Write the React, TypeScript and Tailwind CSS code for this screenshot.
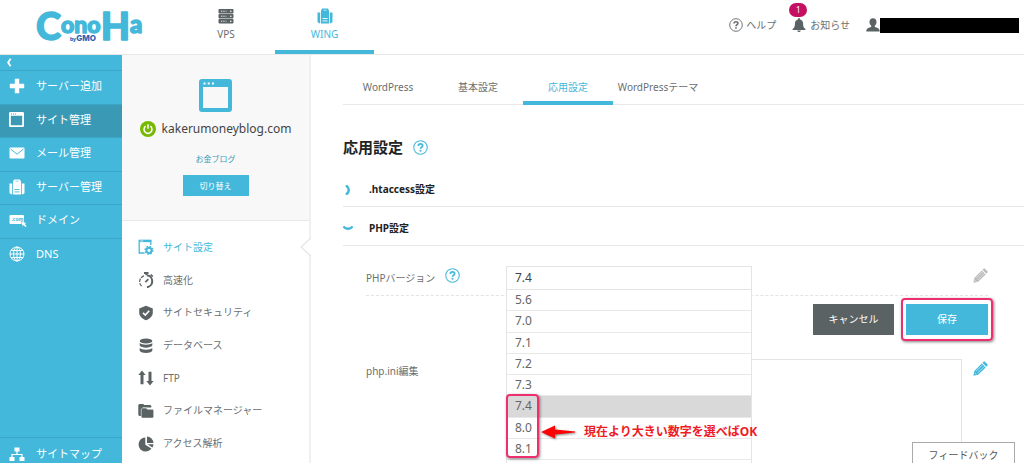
import React, { useState } from 'react';

interface NavItem {
  label: string;
  icon: React.ReactNode;
}

const versions = ['5.6', '7.0', '7.1', '7.2', '7.3', '7.4', '8.0', '8.1'];
const tabs = ['WordPress', '基本設定', '応用設定', 'WordPressテーマ'];

const Logo = () => (
  <svg viewBox="0 0 104 34" className="h-[34px] w-[104px] overflow-visible" role="img" aria-label="ConoHa by GMO">
    <text y="30" fill="#43b8da" stroke="#43b8da" strokeWidth="1.4" strokeLinejoin="round" fontFamily="Lato, sans-serif" fontWeight="900">
      <tspan x="0" fontSize="38">C</tspan>
      <tspan y="23" fontSize="23">ono</tspan>
      <tspan y="30" fontSize="38">H</tspan>
      <tspan y="23" fontSize="24">a</tspan>
    </text>
    <text x="34" y="31" fontWeight="800" fill="#2f5fb3" fontFamily="Inter, sans-serif">
      <tspan fontSize="5">by</tspan>
      <tspan fontSize="8">GMO</tspan>
    </text>
  </svg>
);

const RackIcon = () => (
  <svg viewBox="0 0 16 16" className="size-4" fill="#5a6263">
    {[1, 6, 11].map((y) => (
      <g key={y}>
        <rect x="0.5" y={y} width="15" height="4.4" rx="0.8" />
        <path d={`M3 ${y + 2.2}h5.500`} stroke="#fff" strokeWidth="0.9" strokeDasharray="1 0.7" />
        <circle cx="12.8" cy={y + 2.2} r="0.8" fill="#fff" />
      </g>
    ))}
  </svg>
);

const WingIcon = ({ line }: { line: string }) => (
  <svg viewBox="0 0 16 16" className="size-4" fill="currentColor">
    <path d="M4 2.200 5.200.6h5.600L12 2.200V15.400H4z" />
    <path d="M.5 4.500h2.700v10.800H2L.5 14zM12.800 4.500h2.700V14L14 15.300h-1.200z" />
    <path d="M5.500 10.500h5M5.500 12.900h5" stroke={line} strokeWidth="0.9" />
    <path d="M6.500 2.200h3" stroke={line} strokeWidth="0.6" />
  </svg>
);

const HelpIcon = ({ className }: { className: string }) => (
  <svg viewBox="0 0 16 16" className={className} fill="none" stroke="currentColor">
    <circle cx="8" cy="8" r="7.2" strokeWidth="1.1" />
    <path d="M5.700 6.300c0-1.400 1-2.100 2.300-2.100s2.300.8 2.300 1.900c0 1.700-2.300 1.500-2.300 3.200" strokeWidth="1.8" />
    <path d="M8 10.500v1.900" strokeWidth="1.9" />
  </svg>
);

const WindowIcon = ({ className, dot }: { className: string; dot: string }) => (
  <svg viewBox="0 0 33 33" className={className}>
    <path fill="currentColor" fillRule="evenodd" d="M3 0h27a3 3 0 0 1 3 3v27a3 3 0 0 1-3 3H3a3 3 0 0 1-3-3V3a3 3 0 0 1 3-3zm1 8v21h25V8z" />
    <path d="M4.5 4.5h2M8.7 4.5h2M12.9 4.5h2" stroke={dot} strokeWidth="2.2" />
  </svg>
);

const PencilIcon = ({ className }: { className: string }) => (
  <svg viewBox="0 0 16 16" className={className} fill="currentColor">
    <path d="m12.700.7 2.900 2.900c.3.300.3.700 0 1l-1.400 1.400-4.100-4.100L11.600.6c.3-.3.800-.2 1.100.1z" />
    <path d="m9.400 2.700 4.100 4.100-8 7.900-5.100.9 1-5z" />
    <path d="m3.200 11 6.800-6.800M5 12.800l6.800-6.800" stroke="#fff" strokeWidth="0.6" />
    <path d="m1.700 12.500 1.900 1.900" stroke="#fff" strokeWidth="0.5" />
  </svg>
);

const sideItems: NavItem[] = [
  { label: 'サーバー追加', icon: <svg viewBox="0 0 16 16" className="size-4"><path d="M8 .8v14.4M.8 8h14.4" stroke="currentColor" strokeWidth="4.4" /></svg> },
  { label: 'サイト管理', icon: <WindowIcon className="size-[15px]" dot="#3a9ab5" /> },
  { label: 'メール管理', icon: <svg viewBox="0 0 16 16" className="size-4"><rect x="0.5" y="2.5" width="15" height="11" rx="1" fill="currentColor" /><path d="m1.500 4 6.500 5.200L14.500 4" fill="none" stroke="#43b8da" strokeWidth="1" /></svg> },
  { label: 'サーバー管理', icon: <WingIcon line="#43b8da" /> },
  { label: 'ドメイン', icon: <svg viewBox="0 0 18 16" className="h-4 w-[18px] overflow-visible"><rect x="0.5" y="3" width="14.5" height="9" rx="1" fill="currentColor" /><text x="2.4" y="9" fontSize="5" fontWeight="700" fontFamily="Noto Sans, sans-serif" fill="#43b8da">.com</text><path d="m12 9 5.500 2-1.500 1 1.800 1.900-1.400 1.300-1.800-1.900-1 1.400z" fill="currentColor" stroke="#43b8da" strokeWidth="0.5" /></svg> },
  { label: 'DNS', icon: <svg viewBox="0 0 16 16" className="size-4" fill="none" stroke="currentColor"><circle cx="8" cy="8" r="7" /><ellipse cx="8" cy="8" rx="3.4" ry="7" /><path d="M8 1v14M1 8h14M2 4.5h12M2 11.5h12" /></svg> },
];

const menuItems: NavItem[] = [
  { label: 'サイト設定', icon: <svg viewBox="0 0 16 16" className="size-4"><path d="M6.5 14H1.2V1.5h11.6V6" fill="none" stroke="currentColor" strokeWidth="1.3" /><path d="M1 2h12.300" stroke="currentColor" strokeWidth="2.2" /><path d="M2.3 2h3" stroke="#fff" strokeWidth="0.7" /><circle cx="11" cy="11.3" r="2.6" fill="none" stroke="currentColor" strokeWidth="2" /><circle cx="11" cy="11.3" r="3.9" fill="none" stroke="currentColor" strokeWidth="1.4" strokeDasharray="1.53" /></svg> },
  { label: '高速化', icon: <svg viewBox="0 0 16 16" className="size-4" fill="none" stroke="currentColor"><path d="M9 3.3a6 6 0 0 1 0 11.9" strokeWidth="2" /><path d="M6 3.9a6 6 0 0 0-2 10.5" strokeWidth="1.2" strokeDasharray="3.5 1" /><path d="M6 1h4.5M8.3 1v2.3M12.7 2.6l2 2" strokeWidth="1.8" /><path d="m7.4 10.2 3-3" strokeWidth="1.7" /></svg> },
  { label: 'サイトセキュリティ', icon: <svg viewBox="0 0 16 16" className="size-4"><path d="m8 .8 6.8 2.7v4.2c0 3.6-3.2 6-6.8 7.6-3.6-1.6-6.8-4-6.8-7.6V3.5z" fill="currentColor" /><path d="m5 7.8 2.3 2.2 3.9-4.2" fill="none" stroke="#fff" strokeWidth="1.6" /></svg> },
  { label: 'データベース', icon: <svg viewBox="0 0 16 16" className="size-4" fill="currentColor"><ellipse cx="8" cy="3" rx="6.3" ry="2.4" /><path d="M1.7 5c2 2.2 10.6 2.2 12.6 0v2.6c-1.8 2.8-10.8 2.8-12.6 0z" /><path d="M1.7 10c2 2.2 10.6 2.2 12.6 0v2.7c-1.8 3-10.8 3-12.6 0z" /></svg> },
  { label: 'FTP', icon: <svg viewBox="0 0 16 16" className="size-4" fill="currentColor"><path d="M4 .6 7.600 5H5.500v9.200h-3V5H.4zM12 15.400 8.400 11h2.100V1.800h3V11h2.100z" /></svg> },
  { label: 'ファイルマネージャー', icon: <svg viewBox="0 0 16 16" className="size-4" fill="currentColor"><path d="M.3 12V2l1-1h4l1 1h6.200l.8 1v1.500H5.200L3.300 6v7H1.300z" /><path d="M3.200 6.300 4.500 5l3.800.1 1.200 1.200h5l1.200 1v6.700l-1 1H4.200l-1-1z" stroke="#fff" strokeWidth="0.5" /></svg> },
  { label: 'アクセス解析', icon: <svg viewBox="0 0 16 16" className="size-4" fill="currentColor"><path d="M7.300 1.500v7.200l6.100 3.700A7 7 0 1 1 7.300 1.500z" /><path d="M9 .6a6.600 6.600 0 0 1 6.400 6.400H9z" /><path d="M9.500 8.300h6a6.500 6.500 0 0 1-1.100 3.200z" /></svg> },
];

const Header = () => (
  <header className="flex h-[55px] shrink-0 border-b border-[#e8e8e8] bg-white">
    <a href="#" className="ml-9 mt-[10px] w-[104px]">
      <Logo />
    </a>
    <nav className="ml-[37px] flex">
      <a href="#vps" className="flex w-[98px] flex-col items-center border-b-4 border-transparent pt-2">
        <RackIcon />
        <span className="mt-[2px] leading-4">VPS</span>
      </a>
      <a href="#wing" className="flex w-[99px] flex-col items-center border-b-4 border-[#43b8da] pt-2 text-[#43b8da]">
        <WingIcon line="#fff" />
        <span className="mt-[2px] leading-4">WING</span>
      </a>
    </nav>
    <div className="mb-[4px] ml-auto mr-[5px] flex items-center">
      <a href="#help" className="flex items-center gap-[3px]">
        <HelpIcon className="size-[14px]" />
        ヘルプ
      </a>
      <a href="#news" className="relative ml-4 flex items-center gap-1">
        <svg viewBox="0 0 14 14" className="size-[14px]" fill="#5a6263">
          <path d="M7 .3c.8 0 1.200.5 1.200 1.100 2 .6 2.900 2.200 2.900 4.200 0 3 .5 4.200 2.300 5.400v1H.6V11c1.800-1.200 2.300-2.400 2.300-5.400 0-2 .9-3.600 2.900-4.200C5.800.8 6.200.3 7 .3zM5.300 12.400h3.400a1.700 1.500 0 0 1-3.400 0z" />
        </svg>
        お知らせ
        <span className="absolute -top-[15px] left-[-3px] flex h-[14px] w-[18px] items-center justify-center rounded-full bg-[#c40f63] text-[8px] text-white">1</span>
      </a>
      <a href="#account" className="ml-4 flex items-center" aria-label="アカウント">
        <svg viewBox="0 0 14 14" className="size-[14px]" fill="#5a6263">
          <path d="M7 .3c2.300 0 3.500 1.600 3.500 3.700 0 1.700-.8 3-1.700 3.800v1.300c2.400.7 4.900 1.300 4.900 4.300H.3c0-3 2.500-3.600 4.900-4.300V7.800C4.300 7 3.500 5.700 3.500 4 3.500 1.900 4.700.3 7 .3z" />
        </svg>
        <span className="h-[15px] w-[139px] bg-black" />
      </a>
    </div>
  </header>
);

const Sidebar = () => (
  <aside className="flex w-[122px] shrink-0 flex-col bg-[#43b8da] text-[11px] text-white">
    <button type="button" aria-label="閉じる" className="flex h-[15px] items-center pl-[6px]">
      <svg viewBox="0 0 6 10" className="h-[9px] w-[6px]"><path d="M4.800.8 2 5l2.800 4.200" fill="none" stroke="currentColor" strokeWidth="2" /></svg>
    </button>
    <nav className="flex h-[201px] flex-col">
      {sideItems.map((item, i) => (
        <a
          key={item.label}
          href="#"
          className={`flex flex-1 items-center border-t border-[#3aa5c4] pb-[2px] pl-[9px] ${i === 1 ? 'bg-[#3a9ab5]' : ''}`}
        >
          <span className="flex w-[27px]">{item.icon}</span>
          {item.label}
        </a>
      ))}
    </nav>
    <a href="#sitemap" className="mt-auto flex h-[26px] border-t border-[#3aa5c4] pl-[9px] pt-2">
      <span className="flex w-[27px]">
        <svg viewBox="0 0 16 16" className="size-4" fill="currentColor">
          <path d="M5.500 1.500h5v4h-5zM.5 11h5v4h-5zM10.500 11h5v4h-5z" />
          <path d="M8 5v3.500M3 11V8.500h10V11" fill="none" stroke="currentColor" strokeWidth="1.200" />
        </svg>
      </span>
      <span className="leading-4">サイトマップ</span>
    </a>
  </aside>
);

const SitePanel = () => (
  <section className="flex w-[189px] shrink-0 flex-col border-r-2 border-[#f0f0f0]">
    <div className="flex h-[166px] flex-col items-center border-b border-[#e8e8e8] bg-[#f8f8f8] pt-6">
      <WindowIcon className="size-[33px] text-[#43b8da]" dot="#fff" />
      <div className="mt-[7px] flex items-center gap-[6px] text-[12px] leading-5 text-[#444]">
        <svg viewBox="0 0 16 16" className="size-4">
          <circle cx="8" cy="8" r="8" fill="#76b900" />
          <path d="M5.600 5.200a4 4 0 1 0 4.800 0M8 3.300v4.500" fill="none" stroke="#fff" strokeWidth="1.500" />
        </svg>
        kakerumoneyblog.com
      </div>
      <a href="#blog" className="mt-3 text-[8px] leading-4 text-[#3a9ab5]">お金ブログ</a>
      <button type="button" className="mt-2 h-[21px] w-[66px] bg-[#43b8da] text-[8px] text-white">切り替え</button>
    </div>
    <nav className="mt-[10px] flex h-[229px] flex-col">
      {menuItems.map((item, i) => (
        <a key={item.label} href="#" className={`relative flex flex-1 items-center pl-4 ${i === 0 ? 'text-[#43b8da]' : ''}`}>
          <span className={`flex w-[25px] ${i === 0 ? '' : 'text-[#5a6263]'}`}>{item.icon}</span>
          {item.label}
          {i === 0 && (
            <svg viewBox="0 0 12 20" className="absolute -right-[2px] h-5 w-3">
              <path d="M12 1 2 10l10 9" fill="#fff" stroke="#e4e4e4" strokeWidth="1.200" />
            </svg>
          )}
        </a>
      ))}
    </nav>
  </section>
);

const PhpForm = () => {
  const [version, setVersion] = useState('7.4');

  return (
    <form className="flex flex-1 flex-col pl-[23px] pr-9 pt-5">
      <div className="flex h-[30px] items-start border-b border-dashed border-[#e4e4e4]">
        <div className="flex w-[140px] shrink-0 gap-[10px]">
          <label htmlFor="version" className="mt-1 leading-4">PHPバージョン</label>
          <HelpIcon className="mt-[2px] size-[15px] text-[#43b8da]" />
        </div>
        <div className="relative w-[246px]">
          <select
            id="version"
            value={version}
            onChange={(e) => setVersion(e.target.value)}
            className="block h-6 w-full appearance-none border border-[#e4e4e4] bg-white pl-2 text-[12px] leading-5 text-[#444]"
          >
            {versions.map((v) => (
              <option key={v}>{v}</option>
            ))}
          </select>
          <ul className="absolute left-0 top-6 z-10 flex h-[173px] w-full flex-col border-x border-[#e4e4e4] bg-white pb-[3px] text-[12px] text-[#666]">
            {versions.map((v) => (
              <li
                key={v}
                onClick={() => setVersion(v)}
                className={`flex flex-1 items-center border-b border-[#e8e8e8] pl-2 ${v === version ? 'bg-[#d9d9d9]' : ''}`}
              >
                {v}
              </li>
            ))}
          </ul>
          {/* highlight around the newer versions */}
          <div className="absolute left-0 top-[128px] z-20 h-[64px] w-[33px] rounded-[4px] border-2 border-[#ee2f6e] shadow-[1px_1px_3px_rgba(0,0,0,0.5)]" />
          <div className="absolute left-[35px] top-[156px] z-20 flex items-center gap-[9px] whitespace-nowrap text-[12px] font-bold leading-5 text-[#ee1c24]">
            <svg viewBox="0 0 34 14" className="h-[14px] w-[34px] drop-shadow-[1px_1px_1px_rgba(0,0,0,0.5)]">
              <path d="M0 7 14 .5v4.100l20 2v.8l-20 2v4.100z" fill="#fa0505" />
            </svg>
            現在より大きい数字を選べばOK
          </div>
        </div>
        <button type="button" aria-label="PHPバージョンを編集" className="ml-auto mt-[2px] text-[#bbb]">
          <PencilIcon className="size-[15px]" />
        </button>
      </div>
      <div className="mt-[8px] flex justify-end gap-3">
        <button type="button" className="h-[31px] w-[81px] bg-[#5a6263] text-white">キャンセル</button>
        <div className="relative">
          <button type="submit" className="block h-[31px] w-[82px] bg-[#43b8da] text-white">保存</button>
          <div className="pointer-events-none absolute -inset-x-[5px] -inset-y-[6px] rounded-[4px] border-2 border-[#ee2f6e] shadow-[1px_1px_3px_rgba(0,0,0,0.5)]" />
        </div>
      </div>
      <div className="mt-6 flex flex-1 items-start">
        <label htmlFor="ini" className="mt-1 w-[140px] shrink-0 leading-4">php.ini編集</label>
        <textarea id="ini" className="h-full flex-1 resize-none border border-b-0 border-[#e4e4e4]" />
        <button type="button" aria-label="php.iniを編集" className="ml-[11px] mt-[2px] text-[#43b8da]">
          <PencilIcon className="size-[15px]" />
        </button>
      </div>
    </form>
  );
};

const App: React.FC = () => {
  return (
    <div className="flex h-screen flex-col overflow-hidden bg-white font-['Noto_Sans','Noto_Sans_CJK_JP',sans-serif] text-[10px] text-[#6b6f70]">
      <Header />
      <div className="flex min-h-0 flex-1">
        <Sidebar />
        <SitePanel />
        <main className="flex min-w-0 flex-1 flex-col pl-8">
          <nav className="flex h-[50px] shrink-0 border-b border-[#e8e8e8]">
            {tabs.map((tab) => (
              <a
                key={tab}
                href="#"
                className={`-mb-px flex w-[90px] items-center justify-center whitespace-nowrap border-b-4 pt-[18px] ${
                  tab === '応用設定' ? 'border-[#43b8da] text-[#43b8da]' : 'border-transparent'
                }`}
              >
                {tab}
              </a>
            ))}
          </nav>
          <div className="mt-[30px] flex items-center gap-[10px]">
            <h1 className="text-[15px] font-bold leading-6 text-[#222]">応用設定</h1>
            <HelpIcon className="size-[15px] text-[#43b8da]" />
          </div>
          <button type="button" className="mt-[14px] flex h-[34px] shrink-0 items-center border-b border-[#e8e8e8] font-bold text-[#222]">
            <svg viewBox="0 0 10 10" className="mr-4 size-[10px]"><path d="M3 .3C6.800 3.500 6.800 6.500 3 9.700" fill="none" stroke="#43b8da" strokeWidth="2.400" /></svg>
            .htaccess設定
          </button>
          <button type="button" className="flex h-[39px] shrink-0 items-center border-b border-[#e8e8e8] pt-1 font-bold text-[#222]">
            <svg viewBox="0 0 10 10" className="mr-4 size-[10px]"><path d="M.3 3.500c3.200 3.200 6.200 3.200 9.400 0" fill="none" stroke="#43b8da" strokeWidth="2.400" /></svg>
            PHP設定
          </button>
          <PhpForm />
        </main>
      </div>
      <button type="button" className="fixed bottom-0 right-[9px] z-30 h-[21px] w-[103px] border border-b-0 border-[#aaa] bg-white pt-1 text-[#555]">
        フィードバック
      </button>
    </div>
  );
};

export default App;
